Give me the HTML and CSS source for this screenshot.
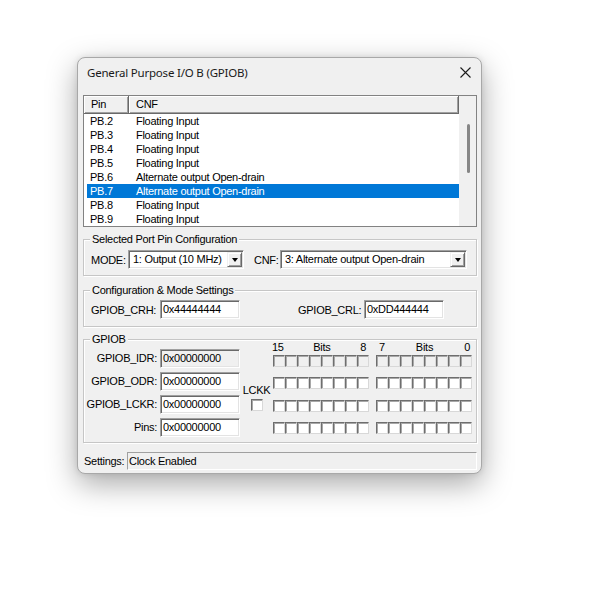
FILE: index.html
```html
<!DOCTYPE html>
<html>
<head>
<meta charset="utf-8">
<title>GPIOB</title>
<link rel="stylesheet" href="styles.css">
</head>
<body>
<div class="stage">
  <div class="dialog">
    <div class="titlebar">
      <span class="title">General Purpose I/O B (GPIOB)</span>
      <svg class="close" width="11" height="11" viewBox="0 0 11 11"><path d="M0.5 0.5L10.5 10.5M10.5 0.5L0.5 10.5" stroke="#1c1c1c" stroke-width="1.1" fill="none"/></svg>
    </div>
    <div class="body">
      <div class="listbox">
        <div class="list-main">
          <div class="list-head">
            <div class="hcell h-pin">Pin</div>
            <div class="hcell h-cnf">CNF</div>
          </div>
          <div class="list-rows">
            <div class="lrow"><span class="c-pin">PB.2</span><span>Floating Input</span></div>
            <div class="lrow"><span class="c-pin">PB.3</span><span>Floating Input</span></div>
            <div class="lrow"><span class="c-pin">PB.4</span><span>Floating Input</span></div>
            <div class="lrow"><span class="c-pin">PB.5</span><span>Floating Input</span></div>
            <div class="lrow"><span class="c-pin">PB.6</span><span>Alternate output Open-drain</span></div>
            <div class="lrow selected"><span class="c-pin">PB.7</span><span>Alternate output Open-drain</span></div>
            <div class="lrow"><span class="c-pin">PB.8</span><span>Floating Input</span></div>
            <div class="lrow"><span class="c-pin">PB.9</span><span>Floating Input</span></div>
          </div>
        </div>
        <div class="vscroll"><div class="thumb"></div></div>
      </div>

      <div class="group g1">
        <div class="g-title">Selected Port Pin Configuration</div>
        <div class="g1-row">
          <span class="lbl-mode">MODE:</span>
          <div class="combo combo-mode"><span class="combo-text">1: Output (10 MHz)</span><span class="drop"><i class="tri"></i></span></div>
          <span class="lbl-cnf">CNF:</span>
          <div class="combo combo-cnf"><span class="combo-text">3: Alternate output Open-drain</span><span class="drop"><i class="tri"></i></span></div>
        </div>
      </div>

      <div class="group g2">
        <div class="g-title">Configuration &amp; Mode Settings</div>
        <div class="g2-row">
          <span class="lbl-crh">GPIOB_CRH:</span>
          <div class="tb">0x44444444</div>
          <span class="lbl-crl">GPIOB_CRL:</span>
          <div class="tb">0xDD444444</div>
        </div>
      </div>

      <div class="group g3">
        <div class="g-title">GPIOB</div>
        <div class="g3-content">
          <div class="regs">
            <span class="rlbl">GPIOB_IDR:</span><div class="tb ro">0x00000000</div>
            <span class="rlbl">GPIOB_ODR:</span><div class="tb">0x00000000</div>
            <span class="rlbl">GPIOB_LCKR:</span><div class="tb">0x00000000</div>
            <span class="rlbl">Pins:</span><div class="tb">0x00000000</div>
          </div>
          <div class="lckk">
            <span class="lckk-lbl">LCKK</span>
            <span class="cb"></span>
          </div>
          <div class="bits">
            <div class="bank bank-hi">
              <div class="bank-head"><span>15</span><span>Bits</span><span>8</span></div>
              <div class="cbrow ro"><span class="cb"></span><span class="cb"></span><span class="cb"></span><span class="cb"></span><span class="cb"></span><span class="cb"></span><span class="cb"></span><span class="cb"></span></div>
              <div class="cbrow"><span class="cb"></span><span class="cb"></span><span class="cb"></span><span class="cb"></span><span class="cb"></span><span class="cb"></span><span class="cb"></span><span class="cb"></span></div>
              <div class="cbrow"><span class="cb"></span><span class="cb"></span><span class="cb"></span><span class="cb"></span><span class="cb"></span><span class="cb"></span><span class="cb"></span><span class="cb"></span></div>
              <div class="cbrow"><span class="cb"></span><span class="cb"></span><span class="cb"></span><span class="cb"></span><span class="cb"></span><span class="cb"></span><span class="cb"></span><span class="cb"></span></div>
            </div>
            <div class="bank bank-lo">
              <div class="bank-head"><span>7</span><span>Bits</span><span>0</span></div>
              <div class="cbrow ro"><span class="cb"></span><span class="cb"></span><span class="cb"></span><span class="cb"></span><span class="cb"></span><span class="cb"></span><span class="cb"></span><span class="cb"></span></div>
              <div class="cbrow"><span class="cb"></span><span class="cb"></span><span class="cb"></span><span class="cb"></span><span class="cb"></span><span class="cb"></span><span class="cb"></span><span class="cb"></span></div>
              <div class="cbrow"><span class="cb"></span><span class="cb"></span><span class="cb"></span><span class="cb"></span><span class="cb"></span><span class="cb"></span><span class="cb"></span><span class="cb"></span></div>
              <div class="cbrow"><span class="cb"></span><span class="cb"></span><span class="cb"></span><span class="cb"></span><span class="cb"></span><span class="cb"></span><span class="cb"></span><span class="cb"></span></div>
            </div>
          </div>
        </div>
      </div>

      <div class="status">
        <span class="status-lbl">Settings:</span>
        <div class="status-field">Clock Enabled</div>
      </div>
    </div>
  </div>
</div>
</body>
</html>
```

FILE: styles.css
```css
* { box-sizing: border-box; }
html, body { margin: 0; padding: 0; background: #ffffff; }
body {
  font-family: "Liberation Sans", Arial, sans-serif;
  font-size: 11px;
  letter-spacing: -0.27px;
  color: #000;
}
.stage { padding: 57px 0 0 77px; min-height: 589px; }

.dialog {
  width: 405px;
  background: #f0f0f0;
  border: 1px solid #a8a8a8;
  border-radius: 8px;
  box-shadow: 0 10px 30px rgba(0, 0, 0, 0.34), 0 0 6px rgba(0, 0, 0, 0.1);
}

.titlebar {
  height: 29px;
  display: flex;
  align-items: center;
  padding: 0 10px 0 9px;
}
.title {
  flex: 1;
  font-family: "Noto Sans", "Liberation Sans", sans-serif;
  font-size: 11.5px;
  letter-spacing: -0.2px;
  color: #1a1a1a;
}
.close { display: block; }

.body { padding: 8px 4px 3px 5px; }

/* list view */
.listbox {
  height: 132px;
  border: 1px solid #828282;
  display: flex;
  background: #fff;
}
.list-main { width: 375px; display: flex; flex-direction: column; }
.list-head { height: 18px; display: flex; }
.hcell {
  height: 18px;
  background: #f0f0f0;
  border-right: 1px solid #696969;
  border-bottom: 1px solid #696969;
  box-shadow: inset 1px 1px #fff, inset -1px -1px #a0a0a0;
  padding-left: 7px;
  line-height: 17px;
}
.h-pin { width: 45px; }
.h-cnf { width: 330px; }
.lrow {
  display: flex;
  height: 14px;
  line-height: 14px;
  margin-left: 3px;
  width: 372px;
}
.lrow .c-pin { width: 49px; padding-left: 3px; }
.lrow.selected { background: #0078d7; color: #fff; }
.vscroll { width: 17px; background: #f0f0f0; padding: 28px 0 0 8px; }
.thumb { width: 3px; height: 49px; background: #868686; border-radius: 2px; }

/* group boxes */
.group {
  border: 1px solid #c6c6c6;
  box-shadow: inset 1px 1px #fff, 1px 1px #fff;
}
.g-title {
  width: max-content;
  height: 13px;
  line-height: 13px;
  margin: -7px 0 0 6px;
  padding: 0 2px;
  background: #f0f0f0;
}
.g1 .g-title, .g2 .g-title { margin-left: -1px; }

.g1 { margin-top: 12px; padding: 0 7px 6px; }
.g1-row { display: flex; align-items: center; margin-top: 4px; height: 19px; }
.lbl-mode { width: 37px; }
.lbl-cnf { width: 26px; margin-left: 10px; }

.combo, .tb, .cb {
  border: 1px solid;
  border-color: #a0a0a0 #ffffff #ffffff #a0a0a0;
  box-shadow: inset 1px 1px #696969, inset -1px -1px #e3e3e3;
}
.combo {
  height: 19px;
  background: #fff;
  display: flex;
  align-items: center;
  padding: 1px 1px 1px 4px;
}
.combo-mode { width: 116px; }
.combo-cnf { width: 187px; }
.combo-text { flex: 1; line-height: 15px; white-space: nowrap; }
.drop {
  width: 15px;
  height: 15px;
  background: #f0f0f0;
  border: 1px solid;
  border-color: #f0f0f0 #696969 #696969 #f0f0f0;
  box-shadow: inset 1px 1px #fff, inset -1px -1px #a0a0a0;
  display: flex;
  align-items: center;
  justify-content: center;
}
.tri {
  display: block;
  width: 0;
  height: 0;
  border-left: 3.5px solid transparent;
  border-right: 3.5px solid transparent;
  border-top: 4px solid #000;
  margin-top: 1px;
}

.g2 { margin-top: 14px; padding: 0 7px 7px; }
.g2-row { display: flex; align-items: center; margin-top: 3px; height: 19px; }
.lbl-crh { width: 69px; }
.lbl-crl { width: 66px; margin-left: 58px; }

.tb {
  width: 80px;
  height: 19px;
  background: #fff;
  padding-left: 2px;
  line-height: 17px;
  white-space: nowrap;
}
.tb.ro { background: #f0f0f0; }

.g3 { margin-top: 12px; padding: 0 0 5px 0; }
.g3-content { display: flex; margin-top: -5px; }
.regs {
  display: grid;
  grid-template-columns: 76px 80px;
  row-gap: 4px;
  padding-top: 8px;
}
.rlbl { text-align: right; padding-right: 3px; line-height: 19px; white-space: nowrap; }
.lckk {
  width: 33px;
  display: flex;
  flex-direction: column;
  align-items: center;
  padding-top: 43px;
}
.lckk-lbl { line-height: 13px; }
.lckk .cb { margin-top: 2px; background: #fff; }

.bits { display: flex; gap: 7px; }
.bank { width: 96px; display: flex; flex-direction: column; }
.bank-head { height: 12px; line-height: 12px; display: flex; justify-content: space-between; }
.bank-hi .bank-head { margin-left: -1px; padding-right: 3px; }
.bank-lo .bank-head { padding: 0 2px 0 3px; }
.cbrow { display: flex; margin-top: 10px; }
.cbrow:nth-child(2) { margin-top: 2px; }
.cbrow:nth-child(4) { margin-top: 11px; }
.cb {
  display: block;
  width: 12px;
  height: 12px;
  background: #fff;
  border-color: #6e6e6e #d8d8d8 #d8d8d8 #6e6e6e;
  box-shadow: inset 1px 1px #a8a8a8;
}
.cbrow.ro .cb { background: #f0f0f0; }

.status { display: flex; margin-top: 9px; height: 18px; }
.status-lbl { width: 43px; margin-left: 1px; line-height: 18px; }
.status-field {
  flex: 1;
  background: #f0f0f0;
  border: 1px solid;
  border-color: #a0a0a0 #fff #fff #a0a0a0;
  padding-left: 1px;
  line-height: 16px;
}
```
